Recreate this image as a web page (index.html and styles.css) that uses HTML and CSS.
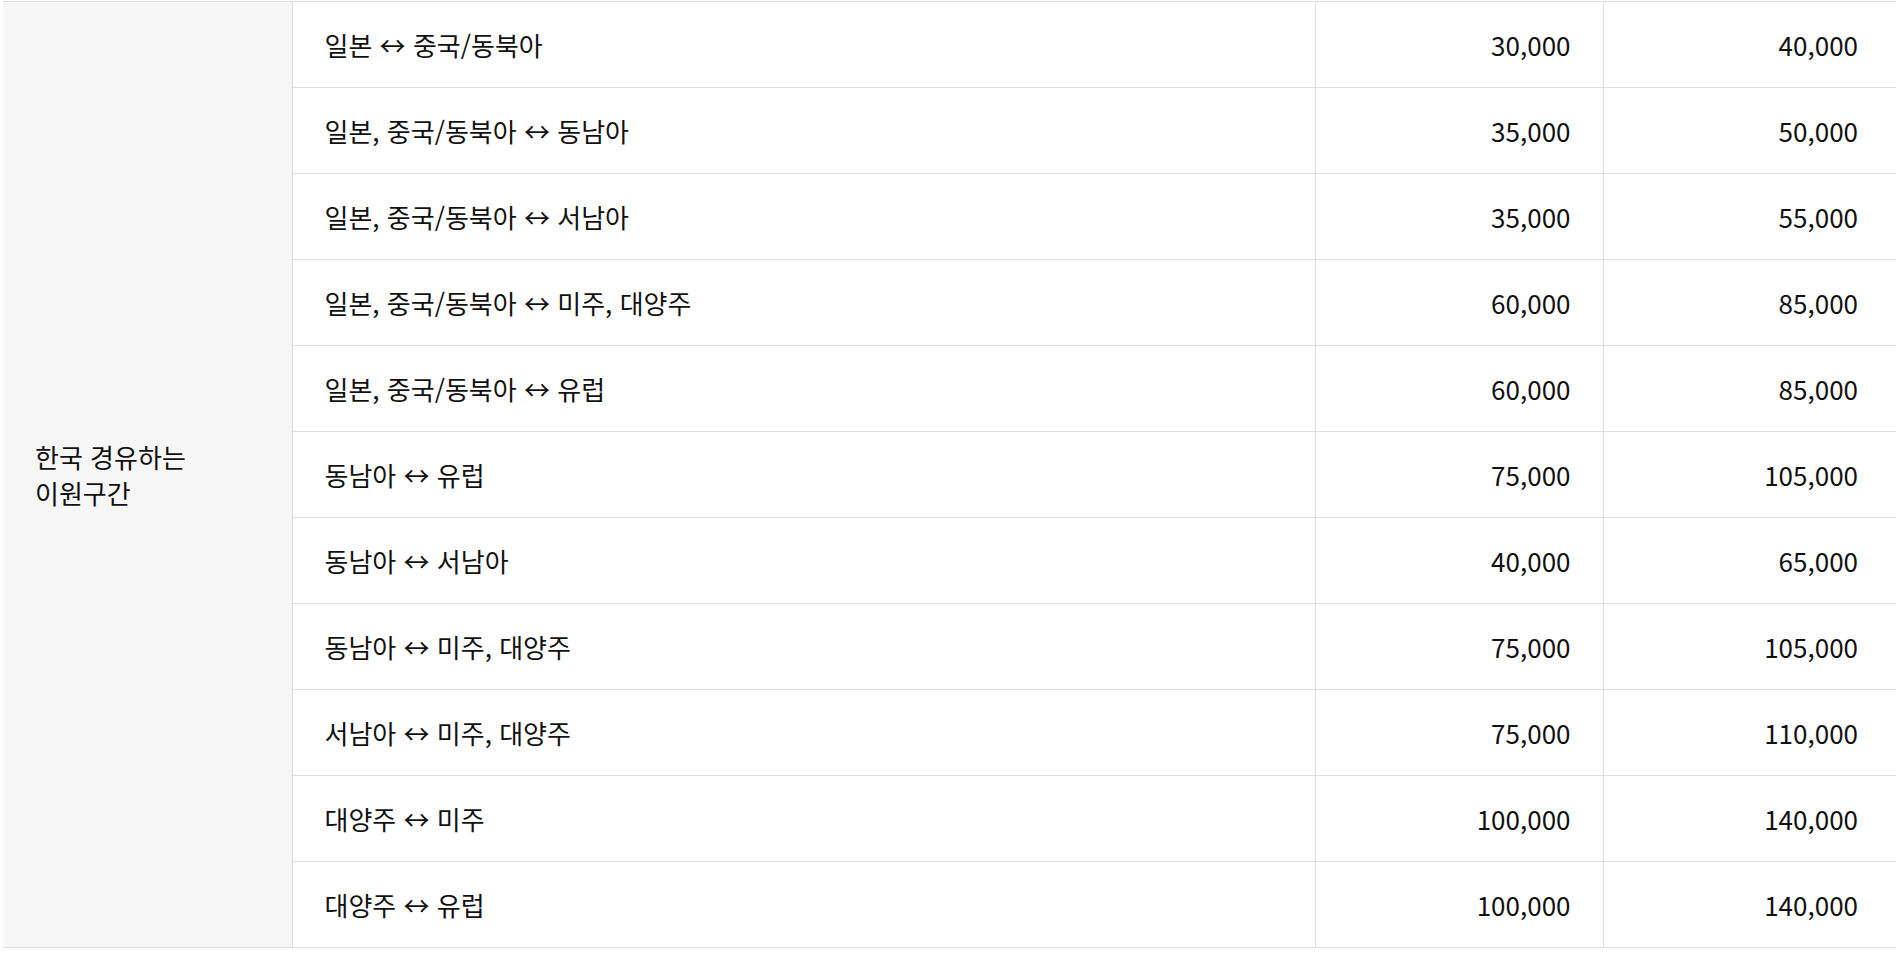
FILE: index.html
```html
<!DOCTYPE html>
<html lang="ko">
<head>
<meta charset="utf-8">
<title>운임표</title>
<link rel="stylesheet" href="styles.css">
</head>
<body>
<table class="fare-table">
  <colgroup>
    <col class="col-group">
    <col class="col-route">
    <col class="col-price">
    <col class="col-price2">
  </colgroup>
  <tbody>
    <tr>
      <th class="group-cell" rowspan="11">한국 경유하는 이원구간</th>
      <td class="route">일본 ↔ 중국/동북아</td>
      <td class="num">30,000</td>
      <td class="num">40,000</td>
    </tr>
    <tr><td class="route">일본, 중국/동북아 ↔ 동남아</td><td class="num">35,000</td><td class="num">50,000</td></tr>
    <tr><td class="route">일본, 중국/동북아 ↔ 서남아</td><td class="num">35,000</td><td class="num">55,000</td></tr>
    <tr><td class="route">일본, 중국/동북아 ↔ 미주, 대양주</td><td class="num">60,000</td><td class="num">85,000</td></tr>
    <tr><td class="route">일본, 중국/동북아 ↔ 유럽</td><td class="num">60,000</td><td class="num">85,000</td></tr>
    <tr><td class="route">동남아 ↔ 유럽</td><td class="num">75,000</td><td class="num">105,000</td></tr>
    <tr><td class="route">동남아 ↔ 서남아</td><td class="num">40,000</td><td class="num">65,000</td></tr>
    <tr><td class="route">동남아 ↔ 미주, 대양주</td><td class="num">75,000</td><td class="num">105,000</td></tr>
    <tr><td class="route">서남아 ↔ 미주, 대양주</td><td class="num">75,000</td><td class="num">110,000</td></tr>
    <tr><td class="route">대양주 ↔ 미주</td><td class="num">100,000</td><td class="num">140,000</td></tr>
    <tr><td class="route">대양주 ↔ 유럽</td><td class="num">100,000</td><td class="num">140,000</td></tr>
  </tbody>
</table>
</body>
</html>
```
FILE: styles.css
```css
html, body {
  margin: 0;
  padding: 0;
  background: #ffffff;
  overflow: hidden;
}

body {
  font-family: "Noto Sans CJK KR", "Noto Sans", sans-serif;
  color: #111111;
  font-size: 26px;
  line-height: 36px;
}

.fare-table {
  border-collapse: collapse;
  table-layout: fixed;
  width: 1900px;
  margin: 1px 0 0 3px;
}

.col-group { width: 289px; }
.col-route { width: 1023px; }
.col-price { width: 288px; }
.col-price2 { width: 300px; }

.fare-table td,
.fare-table th {
  border: 1px solid #dddddd;
  height: 86px;
  box-sizing: border-box;
  padding: 0 32px;
  font-weight: 400;
  vertical-align: middle;
}

.fare-table .group-cell {
  background: #f6f6f6;
  text-align: left;
  border-left: none;
  word-break: keep-all;
}

.fare-table .route {
  text-align: left;
}

.fare-table .num {
  text-align: right;
}

.fare-table tr td:last-child {
  border-right: none;
  padding-right: 45px;
}
```
